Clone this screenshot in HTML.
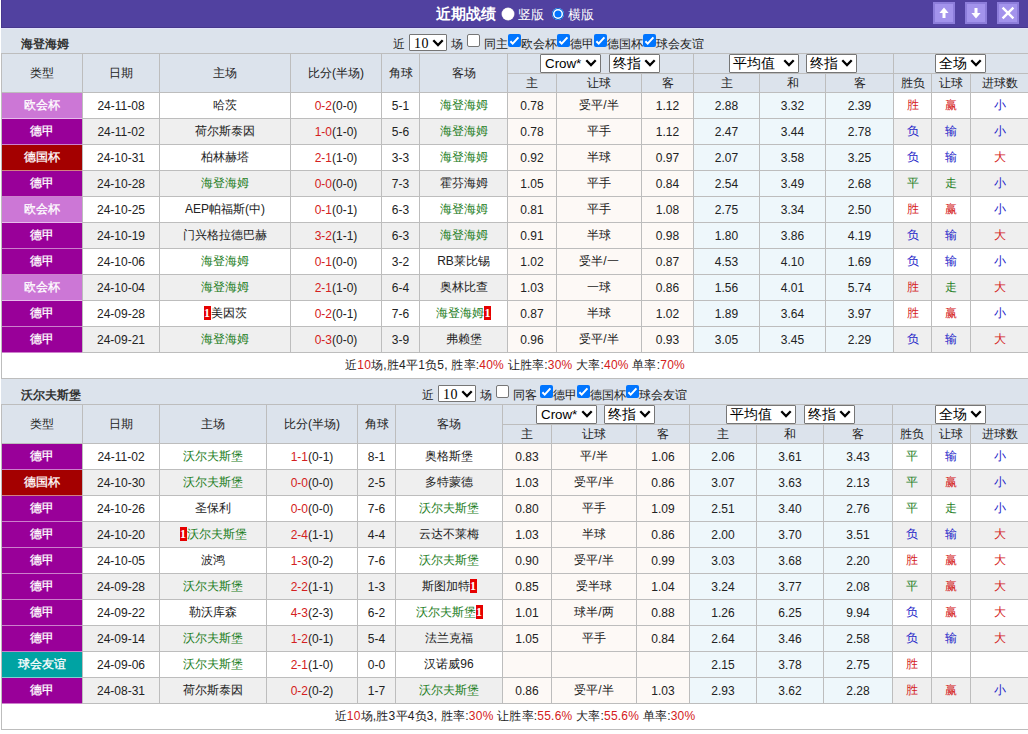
<!DOCTYPE html><html><head><meta charset="utf-8"><style>
html,body{margin:0;padding:0;background:#fff;}
body{width:1028px;height:734px;overflow:hidden;position:relative;font-family:"Liberation Sans",sans-serif;font-size:12px;color:#222;}
div{position:absolute;box-sizing:border-box;}
span{position:relative}
.sel{background:#fff;border:1px solid #767676;border-radius:1px;color:#000;box-sizing:content-box;}
.cb{width:13px;height:13px;border-radius:2px;box-sizing:border-box;border:1px solid #767676;background:#fff}
.cb.on{background:#0075ff;border:none}
.card{display:inline-block;background:#e60000;color:#fff;font-family:"Liberation Serif",serif;font-weight:bold;font-size:12px;line-height:14px;width:7px;text-align:center}
</style></head><body>
<div style="left:1px;top:0px;width:1027px;height:28px;background:#5141a0;border-left:1px solid #48388e;border-bottom:1px solid #48388e"></div>
<div style="left:1px;top:28px;width:1027px;height:1px;background:#e2e3fa"></div>
<div style="left:436px;top:4px;white-space:nowrap;font-size:15px;font-weight:bold;color:#fff;line-height:20px">近期战绩</div>
<div style="left:502px;top:8px;width:12px;height:12px;border-radius:50%;background:#fff;box-shadow:0 0 0 0.5px #ddd"></div>
<div style="left:518px;top:6px;white-space:nowrap;color:#fff;line-height:18px;font-size:13px">竖版</div>
<div style="left:552px;top:8px;width:12px;height:12px;border-radius:50%;background:#0075ff;box-shadow:inset 0 0 0 1px #0060d0, inset 0 0 0 2.5px #fff"></div>
<div style="left:568px;top:6px;white-space:nowrap;color:#fff;line-height:18px;font-size:13px">横版</div>
<div style="left:933px;top:2px;width:22px;height:22px;background:#a393ec;border:2px solid #8d7ddb"><svg width="18" height="18" viewBox="0 0 18 18" style="position:absolute;left:0;top:0"><path d="M9 3.6 L13.6 9 L10.5 9 L10.5 14 L7.5 14 L7.5 9 L4.4 9 Z" fill="#fff"/></svg></div>
<div style="left:965px;top:2px;width:22px;height:22px;background:#a393ec;border:2px solid #8d7ddb"><svg width="18" height="18" viewBox="0 0 18 18" style="position:absolute;left:0;top:0"><path d="M9 14.4 L13.6 9 L10.5 9 L10.5 4 L7.5 4 L7.5 9 L4.4 9 Z" fill="#fff"/></svg></div>
<div style="left:997px;top:2px;width:22px;height:22px;background:#a393ec;border:2px solid #8d7ddb"><svg width="18" height="18" viewBox="0 0 18 18" style="position:absolute;left:0;top:0"><path d="M3.6 3.6 L14.4 14.4 M14.4 3.6 L3.6 14.4" stroke="#fff" stroke-width="2.4"/></svg></div>
<div style="left:1px;top:29px;width:1027px;height:24px;background:#dce3ec"></div>
<div style="left:21px;top:36px;white-space:nowrap;font-weight:bold;line-height:16px;color:#333">海登海姆</div>
<div style="left:1px;top:379px;width:1027px;height:25px;background:#dce3ec"></div>
<div style="left:21px;top:387px;white-space:nowrap;font-weight:bold;line-height:16px;color:#333">沃尔夫斯堡</div>
<div style="left:393px;top:36px;white-space:nowrap;line-height:16px">近</div>
<div class="sel" style="left:409px;top:34px;width:36px;height:15px;"><span style="position:absolute;left:4px;top:1px;line-height:15px;font-family:'Liberation Serif',serif;font-size:14px;letter-spacing:0.5px">10</span><svg style="position:absolute;left:22px;top:4px" width="12" height="8" viewBox="0 0 12 8"><path d="M1.3 1.3 L6 6 L10.7 1.3" fill="none" stroke="#000" stroke-width="2.3"/></svg></div>
<div style="left:451px;top:36px;white-space:nowrap;line-height:16px">场</div>
<div class="cb" style="left:467px;top:34px"></div>
<div style="left:484px;top:36px;white-space:nowrap;line-height:16px">同主</div>
<div class="cb on" style="left:508px;top:34px"><svg width="13" height="13" viewBox="0 0 13 13" style="position:absolute;left:0;top:0"><path d="M2.4 7.2 L4.7 9.6 L10.4 3.3" fill="none" stroke="#fff" stroke-width="2"/></svg></div>
<div style="left:521px;top:36px;white-space:nowrap;line-height:16px">欧会杯</div>
<div class="cb on" style="left:557px;top:34px"><svg width="13" height="13" viewBox="0 0 13 13" style="position:absolute;left:0;top:0"><path d="M2.4 7.2 L4.7 9.6 L10.4 3.3" fill="none" stroke="#fff" stroke-width="2"/></svg></div>
<div style="left:570px;top:36px;white-space:nowrap;line-height:16px">德甲</div>
<div class="cb on" style="left:594px;top:34px"><svg width="13" height="13" viewBox="0 0 13 13" style="position:absolute;left:0;top:0"><path d="M2.4 7.2 L4.7 9.6 L10.4 3.3" fill="none" stroke="#fff" stroke-width="2"/></svg></div>
<div style="left:607px;top:36px;white-space:nowrap;line-height:16px">德国杯</div>
<div class="cb on" style="left:643px;top:34px"><svg width="13" height="13" viewBox="0 0 13 13" style="position:absolute;left:0;top:0"><path d="M2.4 7.2 L4.7 9.6 L10.4 3.3" fill="none" stroke="#fff" stroke-width="2"/></svg></div>
<div style="left:656px;top:36px;white-space:nowrap;line-height:16px">球会友谊</div>
<div style="left:422px;top:387px;white-space:nowrap;line-height:16px">近</div>
<div class="sel" style="left:438px;top:385px;width:36px;height:15px;"><span style="position:absolute;left:4px;top:1px;line-height:15px;font-family:'Liberation Serif',serif;font-size:14px;letter-spacing:0.5px">10</span><svg style="position:absolute;left:22px;top:4px" width="12" height="8" viewBox="0 0 12 8"><path d="M1.3 1.3 L6 6 L10.7 1.3" fill="none" stroke="#000" stroke-width="2.3"/></svg></div>
<div style="left:480px;top:387px;white-space:nowrap;line-height:16px">场</div>
<div class="cb" style="left:496px;top:385px"></div>
<div style="left:513px;top:387px;white-space:nowrap;line-height:16px">同客</div>
<div class="cb on" style="left:540px;top:385px"><svg width="13" height="13" viewBox="0 0 13 13" style="position:absolute;left:0;top:0"><path d="M2.4 7.2 L4.7 9.6 L10.4 3.3" fill="none" stroke="#fff" stroke-width="2"/></svg></div>
<div style="left:553px;top:387px;white-space:nowrap;line-height:16px">德甲</div>
<div class="cb on" style="left:577px;top:385px"><svg width="13" height="13" viewBox="0 0 13 13" style="position:absolute;left:0;top:0"><path d="M2.4 7.2 L4.7 9.6 L10.4 3.3" fill="none" stroke="#fff" stroke-width="2"/></svg></div>
<div style="left:590px;top:387px;white-space:nowrap;line-height:16px">德国杯</div>
<div class="cb on" style="left:626px;top:385px"><svg width="13" height="13" viewBox="0 0 13 13" style="position:absolute;left:0;top:0"><path d="M2.4 7.2 L4.7 9.6 L10.4 3.3" fill="none" stroke="#fff" stroke-width="2"/></svg></div>
<div style="left:639px;top:387px;white-space:nowrap;line-height:16px">球会友谊</div>
<div style="left:2px;top:54px;width:1026px;height:38px;background:#dce3ec"></div>
<div style="left:2px;top:93px;width:80px;height:25px;display:flex;align-items:center;justify-content:center;white-space:nowrap;background:#cc77d6;color:#fff;-webkit-text-stroke:0.3px #fff"><span>欧会杯</span></div>
<div style="left:83px;top:93px;width:76px;height:25px;display:flex;align-items:center;justify-content:center;white-space:nowrap;background:#ffffff"><span>24-11-08</span></div>
<div style="left:160px;top:93px;width:130px;height:25px;display:flex;align-items:center;justify-content:center;white-space:nowrap;background:#ffffff"><span><span style="">哈茨</span></span></div>
<div style="left:291px;top:93px;width:90px;height:25px;display:flex;align-items:center;justify-content:center;white-space:nowrap;background:#ffffff"><span><span style="color:#d42020">0-2</span>(0-0)</span></div>
<div style="left:382px;top:93px;width:37px;height:25px;display:flex;align-items:center;justify-content:center;white-space:nowrap;background:#ffffff"><span>5-1</span></div>
<div style="left:420px;top:93px;width:87px;height:25px;display:flex;align-items:center;justify-content:center;white-space:nowrap;background:#ffffff"><span><span style="color:#1e7e1e">海登海姆</span></span></div>
<div style="left:508px;top:93px;width:48px;height:25px;display:flex;align-items:center;justify-content:center;white-space:nowrap;background:#fdf9f6"><span>0.78</span></div>
<div style="left:557px;top:93px;width:84px;height:25px;display:flex;align-items:center;justify-content:center;white-space:nowrap;background:#fdf9f6"><span>受平/半</span></div>
<div style="left:642px;top:93px;width:51px;height:25px;display:flex;align-items:center;justify-content:center;white-space:nowrap;background:#fdf9f6"><span>1.12</span></div>
<div style="left:694px;top:93px;width:65px;height:25px;display:flex;align-items:center;justify-content:center;white-space:nowrap;background:#eef7fb"><span>2.88</span></div>
<div style="left:760px;top:93px;width:65px;height:25px;display:flex;align-items:center;justify-content:center;white-space:nowrap;background:#eef7fb"><span>3.32</span></div>
<div style="left:826px;top:93px;width:67px;height:25px;display:flex;align-items:center;justify-content:center;white-space:nowrap;background:#eef7fb"><span>2.39</span></div>
<div style="left:894px;top:93px;width:37px;height:25px;display:flex;align-items:center;justify-content:center;white-space:nowrap;background:#ffffff;color:#d42020"><span>胜</span></div>
<div style="left:932px;top:93px;width:38px;height:25px;display:flex;align-items:center;justify-content:center;white-space:nowrap;background:#ffffff;color:#d42020"><span>赢</span></div>
<div style="left:971px;top:93px;width:57px;height:25px;display:flex;align-items:center;justify-content:center;white-space:nowrap;background:#ffffff;color:#1c1cc8"><span>小</span></div>
<div style="left:2px;top:119px;width:80px;height:25px;display:flex;align-items:center;justify-content:center;white-space:nowrap;background:#990099;color:#fff;-webkit-text-stroke:0.3px #fff"><span>德甲</span></div>
<div style="left:83px;top:119px;width:76px;height:25px;display:flex;align-items:center;justify-content:center;white-space:nowrap;background:#efefef"><span>24-11-02</span></div>
<div style="left:160px;top:119px;width:130px;height:25px;display:flex;align-items:center;justify-content:center;white-space:nowrap;background:#efefef"><span><span style="">荷尔斯泰因</span></span></div>
<div style="left:291px;top:119px;width:90px;height:25px;display:flex;align-items:center;justify-content:center;white-space:nowrap;background:#efefef"><span><span style="color:#d42020">1-0</span>(1-0)</span></div>
<div style="left:382px;top:119px;width:37px;height:25px;display:flex;align-items:center;justify-content:center;white-space:nowrap;background:#efefef"><span>5-6</span></div>
<div style="left:420px;top:119px;width:87px;height:25px;display:flex;align-items:center;justify-content:center;white-space:nowrap;background:#efefef"><span><span style="color:#1e7e1e">海登海姆</span></span></div>
<div style="left:508px;top:119px;width:48px;height:25px;display:flex;align-items:center;justify-content:center;white-space:nowrap;background:#fdf9f6"><span>0.78</span></div>
<div style="left:557px;top:119px;width:84px;height:25px;display:flex;align-items:center;justify-content:center;white-space:nowrap;background:#fdf9f6"><span>平手</span></div>
<div style="left:642px;top:119px;width:51px;height:25px;display:flex;align-items:center;justify-content:center;white-space:nowrap;background:#fdf9f6"><span>1.12</span></div>
<div style="left:694px;top:119px;width:65px;height:25px;display:flex;align-items:center;justify-content:center;white-space:nowrap;background:#eef7fb"><span>2.47</span></div>
<div style="left:760px;top:119px;width:65px;height:25px;display:flex;align-items:center;justify-content:center;white-space:nowrap;background:#eef7fb"><span>3.44</span></div>
<div style="left:826px;top:119px;width:67px;height:25px;display:flex;align-items:center;justify-content:center;white-space:nowrap;background:#eef7fb"><span>2.78</span></div>
<div style="left:894px;top:119px;width:37px;height:25px;display:flex;align-items:center;justify-content:center;white-space:nowrap;background:#efefef;color:#1c1cc8"><span>负</span></div>
<div style="left:932px;top:119px;width:38px;height:25px;display:flex;align-items:center;justify-content:center;white-space:nowrap;background:#efefef;color:#1c1cc8"><span>输</span></div>
<div style="left:971px;top:119px;width:57px;height:25px;display:flex;align-items:center;justify-content:center;white-space:nowrap;background:#efefef;color:#1c1cc8"><span>小</span></div>
<div style="left:2px;top:145px;width:80px;height:25px;display:flex;align-items:center;justify-content:center;white-space:nowrap;background:#a40000;color:#fff;-webkit-text-stroke:0.3px #fff"><span>德国杯</span></div>
<div style="left:83px;top:145px;width:76px;height:25px;display:flex;align-items:center;justify-content:center;white-space:nowrap;background:#ffffff"><span>24-10-31</span></div>
<div style="left:160px;top:145px;width:130px;height:25px;display:flex;align-items:center;justify-content:center;white-space:nowrap;background:#ffffff"><span><span style="">柏林赫塔</span></span></div>
<div style="left:291px;top:145px;width:90px;height:25px;display:flex;align-items:center;justify-content:center;white-space:nowrap;background:#ffffff"><span><span style="color:#d42020">2-1</span>(1-0)</span></div>
<div style="left:382px;top:145px;width:37px;height:25px;display:flex;align-items:center;justify-content:center;white-space:nowrap;background:#ffffff"><span>3-3</span></div>
<div style="left:420px;top:145px;width:87px;height:25px;display:flex;align-items:center;justify-content:center;white-space:nowrap;background:#ffffff"><span><span style="color:#1e7e1e">海登海姆</span></span></div>
<div style="left:508px;top:145px;width:48px;height:25px;display:flex;align-items:center;justify-content:center;white-space:nowrap;background:#fdf9f6"><span>0.92</span></div>
<div style="left:557px;top:145px;width:84px;height:25px;display:flex;align-items:center;justify-content:center;white-space:nowrap;background:#fdf9f6"><span>半球</span></div>
<div style="left:642px;top:145px;width:51px;height:25px;display:flex;align-items:center;justify-content:center;white-space:nowrap;background:#fdf9f6"><span>0.97</span></div>
<div style="left:694px;top:145px;width:65px;height:25px;display:flex;align-items:center;justify-content:center;white-space:nowrap;background:#eef7fb"><span>2.07</span></div>
<div style="left:760px;top:145px;width:65px;height:25px;display:flex;align-items:center;justify-content:center;white-space:nowrap;background:#eef7fb"><span>3.58</span></div>
<div style="left:826px;top:145px;width:67px;height:25px;display:flex;align-items:center;justify-content:center;white-space:nowrap;background:#eef7fb"><span>3.25</span></div>
<div style="left:894px;top:145px;width:37px;height:25px;display:flex;align-items:center;justify-content:center;white-space:nowrap;background:#ffffff;color:#1c1cc8"><span>负</span></div>
<div style="left:932px;top:145px;width:38px;height:25px;display:flex;align-items:center;justify-content:center;white-space:nowrap;background:#ffffff;color:#1c1cc8"><span>输</span></div>
<div style="left:971px;top:145px;width:57px;height:25px;display:flex;align-items:center;justify-content:center;white-space:nowrap;background:#ffffff;color:#d42020"><span>大</span></div>
<div style="left:2px;top:171px;width:80px;height:25px;display:flex;align-items:center;justify-content:center;white-space:nowrap;background:#990099;color:#fff;-webkit-text-stroke:0.3px #fff"><span>德甲</span></div>
<div style="left:83px;top:171px;width:76px;height:25px;display:flex;align-items:center;justify-content:center;white-space:nowrap;background:#efefef"><span>24-10-28</span></div>
<div style="left:160px;top:171px;width:130px;height:25px;display:flex;align-items:center;justify-content:center;white-space:nowrap;background:#efefef"><span><span style="color:#1e7e1e">海登海姆</span></span></div>
<div style="left:291px;top:171px;width:90px;height:25px;display:flex;align-items:center;justify-content:center;white-space:nowrap;background:#efefef"><span><span style="color:#d42020">0-0</span>(0-0)</span></div>
<div style="left:382px;top:171px;width:37px;height:25px;display:flex;align-items:center;justify-content:center;white-space:nowrap;background:#efefef"><span>7-3</span></div>
<div style="left:420px;top:171px;width:87px;height:25px;display:flex;align-items:center;justify-content:center;white-space:nowrap;background:#efefef"><span><span style="">霍芬海姆</span></span></div>
<div style="left:508px;top:171px;width:48px;height:25px;display:flex;align-items:center;justify-content:center;white-space:nowrap;background:#fdf9f6"><span>1.05</span></div>
<div style="left:557px;top:171px;width:84px;height:25px;display:flex;align-items:center;justify-content:center;white-space:nowrap;background:#fdf9f6"><span>平手</span></div>
<div style="left:642px;top:171px;width:51px;height:25px;display:flex;align-items:center;justify-content:center;white-space:nowrap;background:#fdf9f6"><span>0.84</span></div>
<div style="left:694px;top:171px;width:65px;height:25px;display:flex;align-items:center;justify-content:center;white-space:nowrap;background:#eef7fb"><span>2.54</span></div>
<div style="left:760px;top:171px;width:65px;height:25px;display:flex;align-items:center;justify-content:center;white-space:nowrap;background:#eef7fb"><span>3.49</span></div>
<div style="left:826px;top:171px;width:67px;height:25px;display:flex;align-items:center;justify-content:center;white-space:nowrap;background:#eef7fb"><span>2.68</span></div>
<div style="left:894px;top:171px;width:37px;height:25px;display:flex;align-items:center;justify-content:center;white-space:nowrap;background:#efefef;color:#1e7e1e"><span>平</span></div>
<div style="left:932px;top:171px;width:38px;height:25px;display:flex;align-items:center;justify-content:center;white-space:nowrap;background:#efefef;color:#1e7e1e"><span>走</span></div>
<div style="left:971px;top:171px;width:57px;height:25px;display:flex;align-items:center;justify-content:center;white-space:nowrap;background:#efefef;color:#1c1cc8"><span>小</span></div>
<div style="left:2px;top:197px;width:80px;height:25px;display:flex;align-items:center;justify-content:center;white-space:nowrap;background:#cc77d6;color:#fff;-webkit-text-stroke:0.3px #fff"><span>欧会杯</span></div>
<div style="left:83px;top:197px;width:76px;height:25px;display:flex;align-items:center;justify-content:center;white-space:nowrap;background:#ffffff"><span>24-10-25</span></div>
<div style="left:160px;top:197px;width:130px;height:25px;display:flex;align-items:center;justify-content:center;white-space:nowrap;background:#ffffff"><span><span style="">AEP帕福斯(中)</span></span></div>
<div style="left:291px;top:197px;width:90px;height:25px;display:flex;align-items:center;justify-content:center;white-space:nowrap;background:#ffffff"><span><span style="color:#d42020">0-1</span>(0-1)</span></div>
<div style="left:382px;top:197px;width:37px;height:25px;display:flex;align-items:center;justify-content:center;white-space:nowrap;background:#ffffff"><span>6-3</span></div>
<div style="left:420px;top:197px;width:87px;height:25px;display:flex;align-items:center;justify-content:center;white-space:nowrap;background:#ffffff"><span><span style="color:#1e7e1e">海登海姆</span></span></div>
<div style="left:508px;top:197px;width:48px;height:25px;display:flex;align-items:center;justify-content:center;white-space:nowrap;background:#fdf9f6"><span>0.81</span></div>
<div style="left:557px;top:197px;width:84px;height:25px;display:flex;align-items:center;justify-content:center;white-space:nowrap;background:#fdf9f6"><span>平手</span></div>
<div style="left:642px;top:197px;width:51px;height:25px;display:flex;align-items:center;justify-content:center;white-space:nowrap;background:#fdf9f6"><span>1.08</span></div>
<div style="left:694px;top:197px;width:65px;height:25px;display:flex;align-items:center;justify-content:center;white-space:nowrap;background:#eef7fb"><span>2.75</span></div>
<div style="left:760px;top:197px;width:65px;height:25px;display:flex;align-items:center;justify-content:center;white-space:nowrap;background:#eef7fb"><span>3.34</span></div>
<div style="left:826px;top:197px;width:67px;height:25px;display:flex;align-items:center;justify-content:center;white-space:nowrap;background:#eef7fb"><span>2.50</span></div>
<div style="left:894px;top:197px;width:37px;height:25px;display:flex;align-items:center;justify-content:center;white-space:nowrap;background:#ffffff;color:#d42020"><span>胜</span></div>
<div style="left:932px;top:197px;width:38px;height:25px;display:flex;align-items:center;justify-content:center;white-space:nowrap;background:#ffffff;color:#d42020"><span>赢</span></div>
<div style="left:971px;top:197px;width:57px;height:25px;display:flex;align-items:center;justify-content:center;white-space:nowrap;background:#ffffff;color:#1c1cc8"><span>小</span></div>
<div style="left:2px;top:223px;width:80px;height:25px;display:flex;align-items:center;justify-content:center;white-space:nowrap;background:#990099;color:#fff;-webkit-text-stroke:0.3px #fff"><span>德甲</span></div>
<div style="left:83px;top:223px;width:76px;height:25px;display:flex;align-items:center;justify-content:center;white-space:nowrap;background:#efefef"><span>24-10-19</span></div>
<div style="left:160px;top:223px;width:130px;height:25px;display:flex;align-items:center;justify-content:center;white-space:nowrap;background:#efefef"><span><span style="">门兴格拉德巴赫</span></span></div>
<div style="left:291px;top:223px;width:90px;height:25px;display:flex;align-items:center;justify-content:center;white-space:nowrap;background:#efefef"><span><span style="color:#d42020">3-2</span>(1-1)</span></div>
<div style="left:382px;top:223px;width:37px;height:25px;display:flex;align-items:center;justify-content:center;white-space:nowrap;background:#efefef"><span>6-3</span></div>
<div style="left:420px;top:223px;width:87px;height:25px;display:flex;align-items:center;justify-content:center;white-space:nowrap;background:#efefef"><span><span style="color:#1e7e1e">海登海姆</span></span></div>
<div style="left:508px;top:223px;width:48px;height:25px;display:flex;align-items:center;justify-content:center;white-space:nowrap;background:#fdf9f6"><span>0.91</span></div>
<div style="left:557px;top:223px;width:84px;height:25px;display:flex;align-items:center;justify-content:center;white-space:nowrap;background:#fdf9f6"><span>半球</span></div>
<div style="left:642px;top:223px;width:51px;height:25px;display:flex;align-items:center;justify-content:center;white-space:nowrap;background:#fdf9f6"><span>0.98</span></div>
<div style="left:694px;top:223px;width:65px;height:25px;display:flex;align-items:center;justify-content:center;white-space:nowrap;background:#eef7fb"><span>1.80</span></div>
<div style="left:760px;top:223px;width:65px;height:25px;display:flex;align-items:center;justify-content:center;white-space:nowrap;background:#eef7fb"><span>3.86</span></div>
<div style="left:826px;top:223px;width:67px;height:25px;display:flex;align-items:center;justify-content:center;white-space:nowrap;background:#eef7fb"><span>4.19</span></div>
<div style="left:894px;top:223px;width:37px;height:25px;display:flex;align-items:center;justify-content:center;white-space:nowrap;background:#efefef;color:#1c1cc8"><span>负</span></div>
<div style="left:932px;top:223px;width:38px;height:25px;display:flex;align-items:center;justify-content:center;white-space:nowrap;background:#efefef;color:#1c1cc8"><span>输</span></div>
<div style="left:971px;top:223px;width:57px;height:25px;display:flex;align-items:center;justify-content:center;white-space:nowrap;background:#efefef;color:#d42020"><span>大</span></div>
<div style="left:2px;top:249px;width:80px;height:25px;display:flex;align-items:center;justify-content:center;white-space:nowrap;background:#990099;color:#fff;-webkit-text-stroke:0.3px #fff"><span>德甲</span></div>
<div style="left:83px;top:249px;width:76px;height:25px;display:flex;align-items:center;justify-content:center;white-space:nowrap;background:#ffffff"><span>24-10-06</span></div>
<div style="left:160px;top:249px;width:130px;height:25px;display:flex;align-items:center;justify-content:center;white-space:nowrap;background:#ffffff"><span><span style="color:#1e7e1e">海登海姆</span></span></div>
<div style="left:291px;top:249px;width:90px;height:25px;display:flex;align-items:center;justify-content:center;white-space:nowrap;background:#ffffff"><span><span style="color:#d42020">0-1</span>(0-0)</span></div>
<div style="left:382px;top:249px;width:37px;height:25px;display:flex;align-items:center;justify-content:center;white-space:nowrap;background:#ffffff"><span>3-2</span></div>
<div style="left:420px;top:249px;width:87px;height:25px;display:flex;align-items:center;justify-content:center;white-space:nowrap;background:#ffffff"><span><span style="">RB莱比锡</span></span></div>
<div style="left:508px;top:249px;width:48px;height:25px;display:flex;align-items:center;justify-content:center;white-space:nowrap;background:#fdf9f6"><span>1.02</span></div>
<div style="left:557px;top:249px;width:84px;height:25px;display:flex;align-items:center;justify-content:center;white-space:nowrap;background:#fdf9f6"><span>受半/一</span></div>
<div style="left:642px;top:249px;width:51px;height:25px;display:flex;align-items:center;justify-content:center;white-space:nowrap;background:#fdf9f6"><span>0.87</span></div>
<div style="left:694px;top:249px;width:65px;height:25px;display:flex;align-items:center;justify-content:center;white-space:nowrap;background:#eef7fb"><span>4.53</span></div>
<div style="left:760px;top:249px;width:65px;height:25px;display:flex;align-items:center;justify-content:center;white-space:nowrap;background:#eef7fb"><span>4.10</span></div>
<div style="left:826px;top:249px;width:67px;height:25px;display:flex;align-items:center;justify-content:center;white-space:nowrap;background:#eef7fb"><span>1.69</span></div>
<div style="left:894px;top:249px;width:37px;height:25px;display:flex;align-items:center;justify-content:center;white-space:nowrap;background:#ffffff;color:#1c1cc8"><span>负</span></div>
<div style="left:932px;top:249px;width:38px;height:25px;display:flex;align-items:center;justify-content:center;white-space:nowrap;background:#ffffff;color:#1c1cc8"><span>输</span></div>
<div style="left:971px;top:249px;width:57px;height:25px;display:flex;align-items:center;justify-content:center;white-space:nowrap;background:#ffffff;color:#1c1cc8"><span>小</span></div>
<div style="left:2px;top:275px;width:80px;height:25px;display:flex;align-items:center;justify-content:center;white-space:nowrap;background:#cc77d6;color:#fff;-webkit-text-stroke:0.3px #fff"><span>欧会杯</span></div>
<div style="left:83px;top:275px;width:76px;height:25px;display:flex;align-items:center;justify-content:center;white-space:nowrap;background:#efefef"><span>24-10-04</span></div>
<div style="left:160px;top:275px;width:130px;height:25px;display:flex;align-items:center;justify-content:center;white-space:nowrap;background:#efefef"><span><span style="color:#1e7e1e">海登海姆</span></span></div>
<div style="left:291px;top:275px;width:90px;height:25px;display:flex;align-items:center;justify-content:center;white-space:nowrap;background:#efefef"><span><span style="color:#d42020">2-1</span>(1-0)</span></div>
<div style="left:382px;top:275px;width:37px;height:25px;display:flex;align-items:center;justify-content:center;white-space:nowrap;background:#efefef"><span>6-4</span></div>
<div style="left:420px;top:275px;width:87px;height:25px;display:flex;align-items:center;justify-content:center;white-space:nowrap;background:#efefef"><span><span style="">奥林比查</span></span></div>
<div style="left:508px;top:275px;width:48px;height:25px;display:flex;align-items:center;justify-content:center;white-space:nowrap;background:#fdf9f6"><span>1.03</span></div>
<div style="left:557px;top:275px;width:84px;height:25px;display:flex;align-items:center;justify-content:center;white-space:nowrap;background:#fdf9f6"><span>一球</span></div>
<div style="left:642px;top:275px;width:51px;height:25px;display:flex;align-items:center;justify-content:center;white-space:nowrap;background:#fdf9f6"><span>0.86</span></div>
<div style="left:694px;top:275px;width:65px;height:25px;display:flex;align-items:center;justify-content:center;white-space:nowrap;background:#eef7fb"><span>1.56</span></div>
<div style="left:760px;top:275px;width:65px;height:25px;display:flex;align-items:center;justify-content:center;white-space:nowrap;background:#eef7fb"><span>4.01</span></div>
<div style="left:826px;top:275px;width:67px;height:25px;display:flex;align-items:center;justify-content:center;white-space:nowrap;background:#eef7fb"><span>5.74</span></div>
<div style="left:894px;top:275px;width:37px;height:25px;display:flex;align-items:center;justify-content:center;white-space:nowrap;background:#efefef;color:#d42020"><span>胜</span></div>
<div style="left:932px;top:275px;width:38px;height:25px;display:flex;align-items:center;justify-content:center;white-space:nowrap;background:#efefef;color:#1e7e1e"><span>走</span></div>
<div style="left:971px;top:275px;width:57px;height:25px;display:flex;align-items:center;justify-content:center;white-space:nowrap;background:#efefef;color:#d42020"><span>大</span></div>
<div style="left:2px;top:301px;width:80px;height:25px;display:flex;align-items:center;justify-content:center;white-space:nowrap;background:#990099;color:#fff;-webkit-text-stroke:0.3px #fff"><span>德甲</span></div>
<div style="left:83px;top:301px;width:76px;height:25px;display:flex;align-items:center;justify-content:center;white-space:nowrap;background:#ffffff"><span>24-09-28</span></div>
<div style="left:160px;top:301px;width:130px;height:25px;display:flex;align-items:center;justify-content:center;white-space:nowrap;background:#ffffff"><span><span class="card">1</span><span style="">美因茨</span></span></div>
<div style="left:291px;top:301px;width:90px;height:25px;display:flex;align-items:center;justify-content:center;white-space:nowrap;background:#ffffff"><span><span style="color:#d42020">0-2</span>(0-1)</span></div>
<div style="left:382px;top:301px;width:37px;height:25px;display:flex;align-items:center;justify-content:center;white-space:nowrap;background:#ffffff"><span>7-6</span></div>
<div style="left:420px;top:301px;width:87px;height:25px;display:flex;align-items:center;justify-content:center;white-space:nowrap;background:#ffffff"><span><span style="color:#1e7e1e">海登海姆</span><span class="card">1</span></span></div>
<div style="left:508px;top:301px;width:48px;height:25px;display:flex;align-items:center;justify-content:center;white-space:nowrap;background:#fdf9f6"><span>0.87</span></div>
<div style="left:557px;top:301px;width:84px;height:25px;display:flex;align-items:center;justify-content:center;white-space:nowrap;background:#fdf9f6"><span>半球</span></div>
<div style="left:642px;top:301px;width:51px;height:25px;display:flex;align-items:center;justify-content:center;white-space:nowrap;background:#fdf9f6"><span>1.02</span></div>
<div style="left:694px;top:301px;width:65px;height:25px;display:flex;align-items:center;justify-content:center;white-space:nowrap;background:#eef7fb"><span>1.89</span></div>
<div style="left:760px;top:301px;width:65px;height:25px;display:flex;align-items:center;justify-content:center;white-space:nowrap;background:#eef7fb"><span>3.64</span></div>
<div style="left:826px;top:301px;width:67px;height:25px;display:flex;align-items:center;justify-content:center;white-space:nowrap;background:#eef7fb"><span>3.97</span></div>
<div style="left:894px;top:301px;width:37px;height:25px;display:flex;align-items:center;justify-content:center;white-space:nowrap;background:#ffffff;color:#d42020"><span>胜</span></div>
<div style="left:932px;top:301px;width:38px;height:25px;display:flex;align-items:center;justify-content:center;white-space:nowrap;background:#ffffff;color:#d42020"><span>赢</span></div>
<div style="left:971px;top:301px;width:57px;height:25px;display:flex;align-items:center;justify-content:center;white-space:nowrap;background:#ffffff;color:#1c1cc8"><span>小</span></div>
<div style="left:2px;top:327px;width:80px;height:25px;display:flex;align-items:center;justify-content:center;white-space:nowrap;background:#990099;color:#fff;-webkit-text-stroke:0.3px #fff"><span>德甲</span></div>
<div style="left:83px;top:327px;width:76px;height:25px;display:flex;align-items:center;justify-content:center;white-space:nowrap;background:#efefef"><span>24-09-21</span></div>
<div style="left:160px;top:327px;width:130px;height:25px;display:flex;align-items:center;justify-content:center;white-space:nowrap;background:#efefef"><span><span style="color:#1e7e1e">海登海姆</span></span></div>
<div style="left:291px;top:327px;width:90px;height:25px;display:flex;align-items:center;justify-content:center;white-space:nowrap;background:#efefef"><span><span style="color:#d42020">0-3</span>(0-0)</span></div>
<div style="left:382px;top:327px;width:37px;height:25px;display:flex;align-items:center;justify-content:center;white-space:nowrap;background:#efefef"><span>3-9</span></div>
<div style="left:420px;top:327px;width:87px;height:25px;display:flex;align-items:center;justify-content:center;white-space:nowrap;background:#efefef"><span><span style="">弗赖堡</span></span></div>
<div style="left:508px;top:327px;width:48px;height:25px;display:flex;align-items:center;justify-content:center;white-space:nowrap;background:#fdf9f6"><span>0.96</span></div>
<div style="left:557px;top:327px;width:84px;height:25px;display:flex;align-items:center;justify-content:center;white-space:nowrap;background:#fdf9f6"><span>受平/半</span></div>
<div style="left:642px;top:327px;width:51px;height:25px;display:flex;align-items:center;justify-content:center;white-space:nowrap;background:#fdf9f6"><span>0.93</span></div>
<div style="left:694px;top:327px;width:65px;height:25px;display:flex;align-items:center;justify-content:center;white-space:nowrap;background:#eef7fb"><span>3.05</span></div>
<div style="left:760px;top:327px;width:65px;height:25px;display:flex;align-items:center;justify-content:center;white-space:nowrap;background:#eef7fb"><span>3.45</span></div>
<div style="left:826px;top:327px;width:67px;height:25px;display:flex;align-items:center;justify-content:center;white-space:nowrap;background:#eef7fb"><span>2.29</span></div>
<div style="left:894px;top:327px;width:37px;height:25px;display:flex;align-items:center;justify-content:center;white-space:nowrap;background:#efefef;color:#1c1cc8"><span>负</span></div>
<div style="left:932px;top:327px;width:38px;height:25px;display:flex;align-items:center;justify-content:center;white-space:nowrap;background:#efefef;color:#1c1cc8"><span>输</span></div>
<div style="left:971px;top:327px;width:57px;height:25px;display:flex;align-items:center;justify-content:center;white-space:nowrap;background:#efefef;color:#d42020"><span>大</span></div>
<div style="left:2px;top:353px;width:1026px;height:25px;background:#fff;display:flex;align-items:center;justify-content:center;white-space:nowrap;letter-spacing:0.22px"><span>近<span style="color:#d42020">10</span>场,胜4平1负5, 胜率:<span style="color:#d42020">40%</span> 让胜率:<span style="color:#d42020">30%</span> 大率:<span style="color:#d42020">40%</span> 单率:<span style="color:#d42020">70%</span></span></div>
<div style="left:1px;top:53px;width:1027px;height:1px;background:#bdbdbd"></div>
<div style="left:507px;top:73px;width:521px;height:1px;background:#bdbdbd"></div>
<div style="left:1px;top:92px;width:1027px;height:1px;background:#bdbdbd"></div>
<div style="left:1px;top:118px;width:1027px;height:1px;background:#bdbdbd"></div>
<div style="left:1px;top:144px;width:1027px;height:1px;background:#bdbdbd"></div>
<div style="left:1px;top:170px;width:1027px;height:1px;background:#bdbdbd"></div>
<div style="left:1px;top:196px;width:1027px;height:1px;background:#bdbdbd"></div>
<div style="left:1px;top:222px;width:1027px;height:1px;background:#bdbdbd"></div>
<div style="left:1px;top:248px;width:1027px;height:1px;background:#bdbdbd"></div>
<div style="left:1px;top:274px;width:1027px;height:1px;background:#bdbdbd"></div>
<div style="left:1px;top:300px;width:1027px;height:1px;background:#bdbdbd"></div>
<div style="left:1px;top:326px;width:1027px;height:1px;background:#bdbdbd"></div>
<div style="left:1px;top:352px;width:1027px;height:1px;background:#bdbdbd"></div>
<div style="left:1px;top:378px;width:1027px;height:1px;background:#bdbdbd"></div>
<div style="left:1px;top:53px;width:1px;height:299px;background:#bdbdbd"></div>
<div style="left:82px;top:53px;width:1px;height:299px;background:#bdbdbd"></div>
<div style="left:159px;top:53px;width:1px;height:299px;background:#bdbdbd"></div>
<div style="left:290px;top:53px;width:1px;height:299px;background:#bdbdbd"></div>
<div style="left:381px;top:53px;width:1px;height:299px;background:#bdbdbd"></div>
<div style="left:419px;top:53px;width:1px;height:299px;background:#bdbdbd"></div>
<div style="left:507px;top:53px;width:1px;height:299px;background:#bdbdbd"></div>
<div style="left:556px;top:73px;width:1px;height:279px;background:#bdbdbd"></div>
<div style="left:641px;top:73px;width:1px;height:279px;background:#bdbdbd"></div>
<div style="left:693px;top:53px;width:1px;height:299px;background:#bdbdbd"></div>
<div style="left:759px;top:73px;width:1px;height:279px;background:#bdbdbd"></div>
<div style="left:825px;top:73px;width:1px;height:279px;background:#bdbdbd"></div>
<div style="left:893px;top:53px;width:1px;height:299px;background:#bdbdbd"></div>
<div style="left:931px;top:73px;width:1px;height:279px;background:#bdbdbd"></div>
<div style="left:970px;top:73px;width:1px;height:279px;background:#bdbdbd"></div>
<div style="left:1px;top:352px;width:1px;height:27px;background:#bdbdbd"></div>
<div style="left:2px;top:118px;width:80px;height:1px;background:#cc77d6"><div style="left:0;top:0;width:100%;height:1px;background:rgba(255,255,255,0.5)"></div></div>
<div style="left:2px;top:144px;width:80px;height:1px;background:#990099"><div style="left:0;top:0;width:100%;height:1px;background:rgba(255,255,255,0.5)"></div></div>
<div style="left:2px;top:170px;width:80px;height:1px;background:#a40000"><div style="left:0;top:0;width:100%;height:1px;background:rgba(255,255,255,0.5)"></div></div>
<div style="left:2px;top:196px;width:80px;height:1px;background:#990099"><div style="left:0;top:0;width:100%;height:1px;background:rgba(255,255,255,0.5)"></div></div>
<div style="left:2px;top:222px;width:80px;height:1px;background:#cc77d6"><div style="left:0;top:0;width:100%;height:1px;background:rgba(255,255,255,0.5)"></div></div>
<div style="left:2px;top:248px;width:80px;height:1px;background:#990099"><div style="left:0;top:0;width:100%;height:1px;background:rgba(255,255,255,0.5)"></div></div>
<div style="left:2px;top:274px;width:80px;height:1px;background:#990099"><div style="left:0;top:0;width:100%;height:1px;background:rgba(255,255,255,0.5)"></div></div>
<div style="left:2px;top:300px;width:80px;height:1px;background:#cc77d6"><div style="left:0;top:0;width:100%;height:1px;background:rgba(255,255,255,0.5)"></div></div>
<div style="left:2px;top:326px;width:80px;height:1px;background:#990099"><div style="left:0;top:0;width:100%;height:1px;background:rgba(255,255,255,0.5)"></div></div>
<div style="left:2px;top:352px;width:80px;height:1px;background:#990099"><div style="left:0;top:0;width:100%;height:1px;background:rgba(255,255,255,0.5)"></div></div>
<div style="left:2px;top:54px;width:80px;height:38px;display:flex;align-items:center;justify-content:center;white-space:nowrap;"><span>类型</span></div>
<div style="left:83px;top:54px;width:76px;height:38px;display:flex;align-items:center;justify-content:center;white-space:nowrap;"><span>日期</span></div>
<div style="left:160px;top:54px;width:130px;height:38px;display:flex;align-items:center;justify-content:center;white-space:nowrap;"><span>主场</span></div>
<div style="left:291px;top:54px;width:90px;height:38px;display:flex;align-items:center;justify-content:center;white-space:nowrap;"><span>比分(半场)</span></div>
<div style="left:382px;top:54px;width:37px;height:38px;display:flex;align-items:center;justify-content:center;white-space:nowrap;"><span>角球</span></div>
<div style="left:420px;top:54px;width:87px;height:38px;display:flex;align-items:center;justify-content:center;white-space:nowrap;"><span>客场</span></div>
<div style="left:508px;top:74px;width:48px;height:18px;display:flex;align-items:center;justify-content:center;white-space:nowrap;"><span>主</span></div>
<div style="left:557px;top:74px;width:84px;height:18px;display:flex;align-items:center;justify-content:center;white-space:nowrap;"><span>让球</span></div>
<div style="left:642px;top:74px;width:51px;height:18px;display:flex;align-items:center;justify-content:center;white-space:nowrap;"><span>客</span></div>
<div style="left:694px;top:74px;width:65px;height:18px;display:flex;align-items:center;justify-content:center;white-space:nowrap;"><span>主</span></div>
<div style="left:760px;top:74px;width:65px;height:18px;display:flex;align-items:center;justify-content:center;white-space:nowrap;"><span>和</span></div>
<div style="left:826px;top:74px;width:67px;height:18px;display:flex;align-items:center;justify-content:center;white-space:nowrap;"><span>客</span></div>
<div style="left:894px;top:74px;width:37px;height:18px;display:flex;align-items:center;justify-content:center;white-space:nowrap;"><span>胜负</span></div>
<div style="left:932px;top:74px;width:38px;height:18px;display:flex;align-items:center;justify-content:center;white-space:nowrap;"><span>让球</span></div>
<div style="left:971px;top:74px;width:57px;height:18px;display:flex;align-items:center;justify-content:center;white-space:nowrap;"><span>进球数</span></div>
<div class="sel" style="left:540px;top:54px;width:59px;height:17px;"><span style="position:absolute;left:4px;top:0;line-height:17px;font-size:13.33px;">Crow*</span><svg style="position:absolute;left:44px;top:4px" width="12" height="8" viewBox="0 0 12 8"><path d="M1.3 1.3 L6 6 L10.7 1.3" fill="none" stroke="#000" stroke-width="2.3"/></svg></div>
<div class="sel" style="left:609px;top:54px;width:49px;height:17px;"><span style="position:absolute;left:3px;top:0;line-height:17px;font-size:14px;">终指</span><svg style="position:absolute;left:34px;top:4px" width="12" height="8" viewBox="0 0 12 8"><path d="M1.3 1.3 L6 6 L10.7 1.3" fill="none" stroke="#000" stroke-width="2.3"/></svg></div>
<div class="sel" style="left:729px;top:54px;width:68px;height:17px;"><span style="position:absolute;left:3px;top:0;line-height:17px;font-size:14px;">平均值</span><svg style="position:absolute;left:53px;top:4px" width="12" height="8" viewBox="0 0 12 8"><path d="M1.3 1.3 L6 6 L10.7 1.3" fill="none" stroke="#000" stroke-width="2.3"/></svg></div>
<div class="sel" style="left:806px;top:54px;width:49px;height:17px;"><span style="position:absolute;left:3px;top:0;line-height:17px;font-size:14px;">终指</span><svg style="position:absolute;left:34px;top:4px" width="12" height="8" viewBox="0 0 12 8"><path d="M1.3 1.3 L6 6 L10.7 1.3" fill="none" stroke="#000" stroke-width="2.3"/></svg></div>
<div class="sel" style="left:935px;top:54px;width:49px;height:17px;"><span style="position:absolute;left:3px;top:0;line-height:17px;font-size:14px;">全场</span><svg style="position:absolute;left:34px;top:4px" width="12" height="8" viewBox="0 0 12 8"><path d="M1.3 1.3 L6 6 L10.7 1.3" fill="none" stroke="#000" stroke-width="2.3"/></svg></div>
<div style="left:2px;top:405px;width:1026px;height:38px;background:#dce3ec"></div>
<div style="left:2px;top:444px;width:80px;height:25px;display:flex;align-items:center;justify-content:center;white-space:nowrap;background:#990099;color:#fff;-webkit-text-stroke:0.3px #fff"><span>德甲</span></div>
<div style="left:83px;top:444px;width:76px;height:25px;display:flex;align-items:center;justify-content:center;white-space:nowrap;background:#ffffff"><span>24-11-02</span></div>
<div style="left:160px;top:444px;width:106px;height:25px;display:flex;align-items:center;justify-content:center;white-space:nowrap;background:#ffffff"><span><span style="color:#1e7e1e">沃尔夫斯堡</span></span></div>
<div style="left:267px;top:444px;width:90px;height:25px;display:flex;align-items:center;justify-content:center;white-space:nowrap;background:#ffffff"><span><span style="color:#d42020">1-1</span>(0-1)</span></div>
<div style="left:358px;top:444px;width:37px;height:25px;display:flex;align-items:center;justify-content:center;white-space:nowrap;background:#ffffff"><span>8-1</span></div>
<div style="left:396px;top:444px;width:106px;height:25px;display:flex;align-items:center;justify-content:center;white-space:nowrap;background:#ffffff"><span><span style="">奥格斯堡</span></span></div>
<div style="left:503px;top:444px;width:48px;height:25px;display:flex;align-items:center;justify-content:center;white-space:nowrap;background:#fdf9f6"><span>0.83</span></div>
<div style="left:552px;top:444px;width:84px;height:25px;display:flex;align-items:center;justify-content:center;white-space:nowrap;background:#fdf9f6"><span>平/半</span></div>
<div style="left:637px;top:444px;width:52px;height:25px;display:flex;align-items:center;justify-content:center;white-space:nowrap;background:#fdf9f6"><span>1.06</span></div>
<div style="left:690px;top:444px;width:66px;height:25px;display:flex;align-items:center;justify-content:center;white-space:nowrap;background:#eef7fb"><span>2.06</span></div>
<div style="left:757px;top:444px;width:66px;height:25px;display:flex;align-items:center;justify-content:center;white-space:nowrap;background:#eef7fb"><span>3.61</span></div>
<div style="left:824px;top:444px;width:68px;height:25px;display:flex;align-items:center;justify-content:center;white-space:nowrap;background:#eef7fb"><span>3.43</span></div>
<div style="left:893px;top:444px;width:38px;height:25px;display:flex;align-items:center;justify-content:center;white-space:nowrap;background:#ffffff;color:#1e7e1e"><span>平</span></div>
<div style="left:932px;top:444px;width:38px;height:25px;display:flex;align-items:center;justify-content:center;white-space:nowrap;background:#ffffff;color:#1c1cc8"><span>输</span></div>
<div style="left:971px;top:444px;width:57px;height:25px;display:flex;align-items:center;justify-content:center;white-space:nowrap;background:#ffffff;color:#1c1cc8"><span>小</span></div>
<div style="left:2px;top:470px;width:80px;height:25px;display:flex;align-items:center;justify-content:center;white-space:nowrap;background:#a40000;color:#fff;-webkit-text-stroke:0.3px #fff"><span>德国杯</span></div>
<div style="left:83px;top:470px;width:76px;height:25px;display:flex;align-items:center;justify-content:center;white-space:nowrap;background:#efefef"><span>24-10-30</span></div>
<div style="left:160px;top:470px;width:106px;height:25px;display:flex;align-items:center;justify-content:center;white-space:nowrap;background:#efefef"><span><span style="color:#1e7e1e">沃尔夫斯堡</span></span></div>
<div style="left:267px;top:470px;width:90px;height:25px;display:flex;align-items:center;justify-content:center;white-space:nowrap;background:#efefef"><span><span style="color:#d42020">0-0</span>(0-0)</span></div>
<div style="left:358px;top:470px;width:37px;height:25px;display:flex;align-items:center;justify-content:center;white-space:nowrap;background:#efefef"><span>2-5</span></div>
<div style="left:396px;top:470px;width:106px;height:25px;display:flex;align-items:center;justify-content:center;white-space:nowrap;background:#efefef"><span><span style="">多特蒙德</span></span></div>
<div style="left:503px;top:470px;width:48px;height:25px;display:flex;align-items:center;justify-content:center;white-space:nowrap;background:#fdf9f6"><span>1.03</span></div>
<div style="left:552px;top:470px;width:84px;height:25px;display:flex;align-items:center;justify-content:center;white-space:nowrap;background:#fdf9f6"><span>受平/半</span></div>
<div style="left:637px;top:470px;width:52px;height:25px;display:flex;align-items:center;justify-content:center;white-space:nowrap;background:#fdf9f6"><span>0.86</span></div>
<div style="left:690px;top:470px;width:66px;height:25px;display:flex;align-items:center;justify-content:center;white-space:nowrap;background:#eef7fb"><span>3.07</span></div>
<div style="left:757px;top:470px;width:66px;height:25px;display:flex;align-items:center;justify-content:center;white-space:nowrap;background:#eef7fb"><span>3.63</span></div>
<div style="left:824px;top:470px;width:68px;height:25px;display:flex;align-items:center;justify-content:center;white-space:nowrap;background:#eef7fb"><span>2.13</span></div>
<div style="left:893px;top:470px;width:38px;height:25px;display:flex;align-items:center;justify-content:center;white-space:nowrap;background:#efefef;color:#1e7e1e"><span>平</span></div>
<div style="left:932px;top:470px;width:38px;height:25px;display:flex;align-items:center;justify-content:center;white-space:nowrap;background:#efefef;color:#d42020"><span>赢</span></div>
<div style="left:971px;top:470px;width:57px;height:25px;display:flex;align-items:center;justify-content:center;white-space:nowrap;background:#efefef;color:#1c1cc8"><span>小</span></div>
<div style="left:2px;top:496px;width:80px;height:25px;display:flex;align-items:center;justify-content:center;white-space:nowrap;background:#990099;color:#fff;-webkit-text-stroke:0.3px #fff"><span>德甲</span></div>
<div style="left:83px;top:496px;width:76px;height:25px;display:flex;align-items:center;justify-content:center;white-space:nowrap;background:#ffffff"><span>24-10-26</span></div>
<div style="left:160px;top:496px;width:106px;height:25px;display:flex;align-items:center;justify-content:center;white-space:nowrap;background:#ffffff"><span><span style="">圣保利</span></span></div>
<div style="left:267px;top:496px;width:90px;height:25px;display:flex;align-items:center;justify-content:center;white-space:nowrap;background:#ffffff"><span><span style="color:#d42020">0-0</span>(0-0)</span></div>
<div style="left:358px;top:496px;width:37px;height:25px;display:flex;align-items:center;justify-content:center;white-space:nowrap;background:#ffffff"><span>7-6</span></div>
<div style="left:396px;top:496px;width:106px;height:25px;display:flex;align-items:center;justify-content:center;white-space:nowrap;background:#ffffff"><span><span style="color:#1e7e1e">沃尔夫斯堡</span></span></div>
<div style="left:503px;top:496px;width:48px;height:25px;display:flex;align-items:center;justify-content:center;white-space:nowrap;background:#fdf9f6"><span>0.80</span></div>
<div style="left:552px;top:496px;width:84px;height:25px;display:flex;align-items:center;justify-content:center;white-space:nowrap;background:#fdf9f6"><span>平手</span></div>
<div style="left:637px;top:496px;width:52px;height:25px;display:flex;align-items:center;justify-content:center;white-space:nowrap;background:#fdf9f6"><span>1.09</span></div>
<div style="left:690px;top:496px;width:66px;height:25px;display:flex;align-items:center;justify-content:center;white-space:nowrap;background:#eef7fb"><span>2.51</span></div>
<div style="left:757px;top:496px;width:66px;height:25px;display:flex;align-items:center;justify-content:center;white-space:nowrap;background:#eef7fb"><span>3.40</span></div>
<div style="left:824px;top:496px;width:68px;height:25px;display:flex;align-items:center;justify-content:center;white-space:nowrap;background:#eef7fb"><span>2.76</span></div>
<div style="left:893px;top:496px;width:38px;height:25px;display:flex;align-items:center;justify-content:center;white-space:nowrap;background:#ffffff;color:#1e7e1e"><span>平</span></div>
<div style="left:932px;top:496px;width:38px;height:25px;display:flex;align-items:center;justify-content:center;white-space:nowrap;background:#ffffff;color:#1e7e1e"><span>走</span></div>
<div style="left:971px;top:496px;width:57px;height:25px;display:flex;align-items:center;justify-content:center;white-space:nowrap;background:#ffffff;color:#1c1cc8"><span>小</span></div>
<div style="left:2px;top:522px;width:80px;height:25px;display:flex;align-items:center;justify-content:center;white-space:nowrap;background:#990099;color:#fff;-webkit-text-stroke:0.3px #fff"><span>德甲</span></div>
<div style="left:83px;top:522px;width:76px;height:25px;display:flex;align-items:center;justify-content:center;white-space:nowrap;background:#efefef"><span>24-10-20</span></div>
<div style="left:160px;top:522px;width:106px;height:25px;display:flex;align-items:center;justify-content:center;white-space:nowrap;background:#efefef"><span><span class="card">1</span><span style="color:#1e7e1e">沃尔夫斯堡</span></span></div>
<div style="left:267px;top:522px;width:90px;height:25px;display:flex;align-items:center;justify-content:center;white-space:nowrap;background:#efefef"><span><span style="color:#d42020">2-4</span>(1-1)</span></div>
<div style="left:358px;top:522px;width:37px;height:25px;display:flex;align-items:center;justify-content:center;white-space:nowrap;background:#efefef"><span>4-4</span></div>
<div style="left:396px;top:522px;width:106px;height:25px;display:flex;align-items:center;justify-content:center;white-space:nowrap;background:#efefef"><span><span style="">云达不莱梅</span></span></div>
<div style="left:503px;top:522px;width:48px;height:25px;display:flex;align-items:center;justify-content:center;white-space:nowrap;background:#fdf9f6"><span>1.03</span></div>
<div style="left:552px;top:522px;width:84px;height:25px;display:flex;align-items:center;justify-content:center;white-space:nowrap;background:#fdf9f6"><span>半球</span></div>
<div style="left:637px;top:522px;width:52px;height:25px;display:flex;align-items:center;justify-content:center;white-space:nowrap;background:#fdf9f6"><span>0.86</span></div>
<div style="left:690px;top:522px;width:66px;height:25px;display:flex;align-items:center;justify-content:center;white-space:nowrap;background:#eef7fb"><span>2.00</span></div>
<div style="left:757px;top:522px;width:66px;height:25px;display:flex;align-items:center;justify-content:center;white-space:nowrap;background:#eef7fb"><span>3.70</span></div>
<div style="left:824px;top:522px;width:68px;height:25px;display:flex;align-items:center;justify-content:center;white-space:nowrap;background:#eef7fb"><span>3.51</span></div>
<div style="left:893px;top:522px;width:38px;height:25px;display:flex;align-items:center;justify-content:center;white-space:nowrap;background:#efefef;color:#1c1cc8"><span>负</span></div>
<div style="left:932px;top:522px;width:38px;height:25px;display:flex;align-items:center;justify-content:center;white-space:nowrap;background:#efefef;color:#1c1cc8"><span>输</span></div>
<div style="left:971px;top:522px;width:57px;height:25px;display:flex;align-items:center;justify-content:center;white-space:nowrap;background:#efefef;color:#d42020"><span>大</span></div>
<div style="left:2px;top:548px;width:80px;height:25px;display:flex;align-items:center;justify-content:center;white-space:nowrap;background:#990099;color:#fff;-webkit-text-stroke:0.3px #fff"><span>德甲</span></div>
<div style="left:83px;top:548px;width:76px;height:25px;display:flex;align-items:center;justify-content:center;white-space:nowrap;background:#ffffff"><span>24-10-05</span></div>
<div style="left:160px;top:548px;width:106px;height:25px;display:flex;align-items:center;justify-content:center;white-space:nowrap;background:#ffffff"><span><span style="">波鸿</span></span></div>
<div style="left:267px;top:548px;width:90px;height:25px;display:flex;align-items:center;justify-content:center;white-space:nowrap;background:#ffffff"><span><span style="color:#d42020">1-3</span>(0-2)</span></div>
<div style="left:358px;top:548px;width:37px;height:25px;display:flex;align-items:center;justify-content:center;white-space:nowrap;background:#ffffff"><span>7-6</span></div>
<div style="left:396px;top:548px;width:106px;height:25px;display:flex;align-items:center;justify-content:center;white-space:nowrap;background:#ffffff"><span><span style="color:#1e7e1e">沃尔夫斯堡</span></span></div>
<div style="left:503px;top:548px;width:48px;height:25px;display:flex;align-items:center;justify-content:center;white-space:nowrap;background:#fdf9f6"><span>0.90</span></div>
<div style="left:552px;top:548px;width:84px;height:25px;display:flex;align-items:center;justify-content:center;white-space:nowrap;background:#fdf9f6"><span>受平/半</span></div>
<div style="left:637px;top:548px;width:52px;height:25px;display:flex;align-items:center;justify-content:center;white-space:nowrap;background:#fdf9f6"><span>0.99</span></div>
<div style="left:690px;top:548px;width:66px;height:25px;display:flex;align-items:center;justify-content:center;white-space:nowrap;background:#eef7fb"><span>3.03</span></div>
<div style="left:757px;top:548px;width:66px;height:25px;display:flex;align-items:center;justify-content:center;white-space:nowrap;background:#eef7fb"><span>3.68</span></div>
<div style="left:824px;top:548px;width:68px;height:25px;display:flex;align-items:center;justify-content:center;white-space:nowrap;background:#eef7fb"><span>2.20</span></div>
<div style="left:893px;top:548px;width:38px;height:25px;display:flex;align-items:center;justify-content:center;white-space:nowrap;background:#ffffff;color:#d42020"><span>胜</span></div>
<div style="left:932px;top:548px;width:38px;height:25px;display:flex;align-items:center;justify-content:center;white-space:nowrap;background:#ffffff;color:#d42020"><span>赢</span></div>
<div style="left:971px;top:548px;width:57px;height:25px;display:flex;align-items:center;justify-content:center;white-space:nowrap;background:#ffffff;color:#d42020"><span>大</span></div>
<div style="left:2px;top:574px;width:80px;height:25px;display:flex;align-items:center;justify-content:center;white-space:nowrap;background:#990099;color:#fff;-webkit-text-stroke:0.3px #fff"><span>德甲</span></div>
<div style="left:83px;top:574px;width:76px;height:25px;display:flex;align-items:center;justify-content:center;white-space:nowrap;background:#efefef"><span>24-09-28</span></div>
<div style="left:160px;top:574px;width:106px;height:25px;display:flex;align-items:center;justify-content:center;white-space:nowrap;background:#efefef"><span><span style="color:#1e7e1e">沃尔夫斯堡</span></span></div>
<div style="left:267px;top:574px;width:90px;height:25px;display:flex;align-items:center;justify-content:center;white-space:nowrap;background:#efefef"><span><span style="color:#d42020">2-2</span>(1-1)</span></div>
<div style="left:358px;top:574px;width:37px;height:25px;display:flex;align-items:center;justify-content:center;white-space:nowrap;background:#efefef"><span>1-3</span></div>
<div style="left:396px;top:574px;width:106px;height:25px;display:flex;align-items:center;justify-content:center;white-space:nowrap;background:#efefef"><span><span style="">斯图加特</span><span class="card">1</span></span></div>
<div style="left:503px;top:574px;width:48px;height:25px;display:flex;align-items:center;justify-content:center;white-space:nowrap;background:#fdf9f6"><span>0.85</span></div>
<div style="left:552px;top:574px;width:84px;height:25px;display:flex;align-items:center;justify-content:center;white-space:nowrap;background:#fdf9f6"><span>受半球</span></div>
<div style="left:637px;top:574px;width:52px;height:25px;display:flex;align-items:center;justify-content:center;white-space:nowrap;background:#fdf9f6"><span>1.04</span></div>
<div style="left:690px;top:574px;width:66px;height:25px;display:flex;align-items:center;justify-content:center;white-space:nowrap;background:#eef7fb"><span>3.24</span></div>
<div style="left:757px;top:574px;width:66px;height:25px;display:flex;align-items:center;justify-content:center;white-space:nowrap;background:#eef7fb"><span>3.77</span></div>
<div style="left:824px;top:574px;width:68px;height:25px;display:flex;align-items:center;justify-content:center;white-space:nowrap;background:#eef7fb"><span>2.08</span></div>
<div style="left:893px;top:574px;width:38px;height:25px;display:flex;align-items:center;justify-content:center;white-space:nowrap;background:#efefef;color:#1e7e1e"><span>平</span></div>
<div style="left:932px;top:574px;width:38px;height:25px;display:flex;align-items:center;justify-content:center;white-space:nowrap;background:#efefef;color:#d42020"><span>赢</span></div>
<div style="left:971px;top:574px;width:57px;height:25px;display:flex;align-items:center;justify-content:center;white-space:nowrap;background:#efefef;color:#d42020"><span>大</span></div>
<div style="left:2px;top:600px;width:80px;height:25px;display:flex;align-items:center;justify-content:center;white-space:nowrap;background:#990099;color:#fff;-webkit-text-stroke:0.3px #fff"><span>德甲</span></div>
<div style="left:83px;top:600px;width:76px;height:25px;display:flex;align-items:center;justify-content:center;white-space:nowrap;background:#ffffff"><span>24-09-22</span></div>
<div style="left:160px;top:600px;width:106px;height:25px;display:flex;align-items:center;justify-content:center;white-space:nowrap;background:#ffffff"><span><span style="">勒沃库森</span></span></div>
<div style="left:267px;top:600px;width:90px;height:25px;display:flex;align-items:center;justify-content:center;white-space:nowrap;background:#ffffff"><span><span style="color:#d42020">4-3</span>(2-3)</span></div>
<div style="left:358px;top:600px;width:37px;height:25px;display:flex;align-items:center;justify-content:center;white-space:nowrap;background:#ffffff"><span>6-2</span></div>
<div style="left:396px;top:600px;width:106px;height:25px;display:flex;align-items:center;justify-content:center;white-space:nowrap;background:#ffffff"><span><span style="color:#1e7e1e">沃尔夫斯堡</span><span class="card">1</span></span></div>
<div style="left:503px;top:600px;width:48px;height:25px;display:flex;align-items:center;justify-content:center;white-space:nowrap;background:#fdf9f6"><span>1.01</span></div>
<div style="left:552px;top:600px;width:84px;height:25px;display:flex;align-items:center;justify-content:center;white-space:nowrap;background:#fdf9f6"><span>球半/两</span></div>
<div style="left:637px;top:600px;width:52px;height:25px;display:flex;align-items:center;justify-content:center;white-space:nowrap;background:#fdf9f6"><span>0.88</span></div>
<div style="left:690px;top:600px;width:66px;height:25px;display:flex;align-items:center;justify-content:center;white-space:nowrap;background:#eef7fb"><span>1.26</span></div>
<div style="left:757px;top:600px;width:66px;height:25px;display:flex;align-items:center;justify-content:center;white-space:nowrap;background:#eef7fb"><span>6.25</span></div>
<div style="left:824px;top:600px;width:68px;height:25px;display:flex;align-items:center;justify-content:center;white-space:nowrap;background:#eef7fb"><span>9.94</span></div>
<div style="left:893px;top:600px;width:38px;height:25px;display:flex;align-items:center;justify-content:center;white-space:nowrap;background:#ffffff;color:#1c1cc8"><span>负</span></div>
<div style="left:932px;top:600px;width:38px;height:25px;display:flex;align-items:center;justify-content:center;white-space:nowrap;background:#ffffff;color:#d42020"><span>赢</span></div>
<div style="left:971px;top:600px;width:57px;height:25px;display:flex;align-items:center;justify-content:center;white-space:nowrap;background:#ffffff;color:#d42020"><span>大</span></div>
<div style="left:2px;top:626px;width:80px;height:25px;display:flex;align-items:center;justify-content:center;white-space:nowrap;background:#990099;color:#fff;-webkit-text-stroke:0.3px #fff"><span>德甲</span></div>
<div style="left:83px;top:626px;width:76px;height:25px;display:flex;align-items:center;justify-content:center;white-space:nowrap;background:#efefef"><span>24-09-14</span></div>
<div style="left:160px;top:626px;width:106px;height:25px;display:flex;align-items:center;justify-content:center;white-space:nowrap;background:#efefef"><span><span style="color:#1e7e1e">沃尔夫斯堡</span></span></div>
<div style="left:267px;top:626px;width:90px;height:25px;display:flex;align-items:center;justify-content:center;white-space:nowrap;background:#efefef"><span><span style="color:#d42020">1-2</span>(0-1)</span></div>
<div style="left:358px;top:626px;width:37px;height:25px;display:flex;align-items:center;justify-content:center;white-space:nowrap;background:#efefef"><span>5-4</span></div>
<div style="left:396px;top:626px;width:106px;height:25px;display:flex;align-items:center;justify-content:center;white-space:nowrap;background:#efefef"><span><span style="">法兰克福</span></span></div>
<div style="left:503px;top:626px;width:48px;height:25px;display:flex;align-items:center;justify-content:center;white-space:nowrap;background:#fdf9f6"><span>1.05</span></div>
<div style="left:552px;top:626px;width:84px;height:25px;display:flex;align-items:center;justify-content:center;white-space:nowrap;background:#fdf9f6"><span>平手</span></div>
<div style="left:637px;top:626px;width:52px;height:25px;display:flex;align-items:center;justify-content:center;white-space:nowrap;background:#fdf9f6"><span>0.84</span></div>
<div style="left:690px;top:626px;width:66px;height:25px;display:flex;align-items:center;justify-content:center;white-space:nowrap;background:#eef7fb"><span>2.64</span></div>
<div style="left:757px;top:626px;width:66px;height:25px;display:flex;align-items:center;justify-content:center;white-space:nowrap;background:#eef7fb"><span>3.46</span></div>
<div style="left:824px;top:626px;width:68px;height:25px;display:flex;align-items:center;justify-content:center;white-space:nowrap;background:#eef7fb"><span>2.58</span></div>
<div style="left:893px;top:626px;width:38px;height:25px;display:flex;align-items:center;justify-content:center;white-space:nowrap;background:#efefef;color:#1c1cc8"><span>负</span></div>
<div style="left:932px;top:626px;width:38px;height:25px;display:flex;align-items:center;justify-content:center;white-space:nowrap;background:#efefef;color:#1c1cc8"><span>输</span></div>
<div style="left:971px;top:626px;width:57px;height:25px;display:flex;align-items:center;justify-content:center;white-space:nowrap;background:#efefef;color:#d42020"><span>大</span></div>
<div style="left:2px;top:652px;width:80px;height:25px;display:flex;align-items:center;justify-content:center;white-space:nowrap;background:#00a3a3;color:#fff;-webkit-text-stroke:0.3px #fff"><span>球会友谊</span></div>
<div style="left:83px;top:652px;width:76px;height:25px;display:flex;align-items:center;justify-content:center;white-space:nowrap;background:#ffffff"><span>24-09-06</span></div>
<div style="left:160px;top:652px;width:106px;height:25px;display:flex;align-items:center;justify-content:center;white-space:nowrap;background:#ffffff"><span><span style="color:#1e7e1e">沃尔夫斯堡</span></span></div>
<div style="left:267px;top:652px;width:90px;height:25px;display:flex;align-items:center;justify-content:center;white-space:nowrap;background:#ffffff"><span><span style="color:#d42020">2-1</span>(1-0)</span></div>
<div style="left:358px;top:652px;width:37px;height:25px;display:flex;align-items:center;justify-content:center;white-space:nowrap;background:#ffffff"><span>0-0</span></div>
<div style="left:396px;top:652px;width:106px;height:25px;display:flex;align-items:center;justify-content:center;white-space:nowrap;background:#ffffff"><span><span style="">汉诺威96</span></span></div>
<div style="left:503px;top:652px;width:48px;height:25px;display:flex;align-items:center;justify-content:center;white-space:nowrap;background:#fdf9f6"><span></span></div>
<div style="left:552px;top:652px;width:84px;height:25px;display:flex;align-items:center;justify-content:center;white-space:nowrap;background:#fdf9f6"><span></span></div>
<div style="left:637px;top:652px;width:52px;height:25px;display:flex;align-items:center;justify-content:center;white-space:nowrap;background:#fdf9f6"><span></span></div>
<div style="left:690px;top:652px;width:66px;height:25px;display:flex;align-items:center;justify-content:center;white-space:nowrap;background:#eef7fb"><span>2.15</span></div>
<div style="left:757px;top:652px;width:66px;height:25px;display:flex;align-items:center;justify-content:center;white-space:nowrap;background:#eef7fb"><span>3.78</span></div>
<div style="left:824px;top:652px;width:68px;height:25px;display:flex;align-items:center;justify-content:center;white-space:nowrap;background:#eef7fb"><span>2.75</span></div>
<div style="left:893px;top:652px;width:38px;height:25px;display:flex;align-items:center;justify-content:center;white-space:nowrap;background:#ffffff;color:#d42020"><span>胜</span></div>
<div style="left:932px;top:652px;width:38px;height:25px;display:flex;align-items:center;justify-content:center;white-space:nowrap;background:#ffffff;color:#333333"><span></span></div>
<div style="left:971px;top:652px;width:57px;height:25px;display:flex;align-items:center;justify-content:center;white-space:nowrap;background:#ffffff;color:#333333"><span></span></div>
<div style="left:2px;top:678px;width:80px;height:25px;display:flex;align-items:center;justify-content:center;white-space:nowrap;background:#990099;color:#fff;-webkit-text-stroke:0.3px #fff"><span>德甲</span></div>
<div style="left:83px;top:678px;width:76px;height:25px;display:flex;align-items:center;justify-content:center;white-space:nowrap;background:#efefef"><span>24-08-31</span></div>
<div style="left:160px;top:678px;width:106px;height:25px;display:flex;align-items:center;justify-content:center;white-space:nowrap;background:#efefef"><span><span style="">荷尔斯泰因</span></span></div>
<div style="left:267px;top:678px;width:90px;height:25px;display:flex;align-items:center;justify-content:center;white-space:nowrap;background:#efefef"><span><span style="color:#d42020">0-2</span>(0-2)</span></div>
<div style="left:358px;top:678px;width:37px;height:25px;display:flex;align-items:center;justify-content:center;white-space:nowrap;background:#efefef"><span>1-7</span></div>
<div style="left:396px;top:678px;width:106px;height:25px;display:flex;align-items:center;justify-content:center;white-space:nowrap;background:#efefef"><span><span style="color:#1e7e1e">沃尔夫斯堡</span></span></div>
<div style="left:503px;top:678px;width:48px;height:25px;display:flex;align-items:center;justify-content:center;white-space:nowrap;background:#fdf9f6"><span>0.86</span></div>
<div style="left:552px;top:678px;width:84px;height:25px;display:flex;align-items:center;justify-content:center;white-space:nowrap;background:#fdf9f6"><span>受平/半</span></div>
<div style="left:637px;top:678px;width:52px;height:25px;display:flex;align-items:center;justify-content:center;white-space:nowrap;background:#fdf9f6"><span>1.03</span></div>
<div style="left:690px;top:678px;width:66px;height:25px;display:flex;align-items:center;justify-content:center;white-space:nowrap;background:#eef7fb"><span>2.93</span></div>
<div style="left:757px;top:678px;width:66px;height:25px;display:flex;align-items:center;justify-content:center;white-space:nowrap;background:#eef7fb"><span>3.62</span></div>
<div style="left:824px;top:678px;width:68px;height:25px;display:flex;align-items:center;justify-content:center;white-space:nowrap;background:#eef7fb"><span>2.28</span></div>
<div style="left:893px;top:678px;width:38px;height:25px;display:flex;align-items:center;justify-content:center;white-space:nowrap;background:#efefef;color:#d42020"><span>胜</span></div>
<div style="left:932px;top:678px;width:38px;height:25px;display:flex;align-items:center;justify-content:center;white-space:nowrap;background:#efefef;color:#d42020"><span>赢</span></div>
<div style="left:971px;top:678px;width:57px;height:25px;display:flex;align-items:center;justify-content:center;white-space:nowrap;background:#efefef;color:#1c1cc8"><span>小</span></div>
<div style="left:2px;top:704px;width:1026px;height:25px;background:#fff;display:flex;align-items:center;justify-content:center;white-space:nowrap;letter-spacing:0.22px"><span>近<span style="color:#d42020">10</span>场,胜3平4负3, 胜率:<span style="color:#d42020">30%</span> 让胜率:<span style="color:#d42020">55.6%</span> 大率:<span style="color:#d42020">55.6%</span> 单率:<span style="color:#d42020">30%</span></span></div>
<div style="left:1px;top:404px;width:1027px;height:1px;background:#bdbdbd"></div>
<div style="left:502px;top:424px;width:526px;height:1px;background:#bdbdbd"></div>
<div style="left:1px;top:443px;width:1027px;height:1px;background:#bdbdbd"></div>
<div style="left:1px;top:469px;width:1027px;height:1px;background:#bdbdbd"></div>
<div style="left:1px;top:495px;width:1027px;height:1px;background:#bdbdbd"></div>
<div style="left:1px;top:521px;width:1027px;height:1px;background:#bdbdbd"></div>
<div style="left:1px;top:547px;width:1027px;height:1px;background:#bdbdbd"></div>
<div style="left:1px;top:573px;width:1027px;height:1px;background:#bdbdbd"></div>
<div style="left:1px;top:599px;width:1027px;height:1px;background:#bdbdbd"></div>
<div style="left:1px;top:625px;width:1027px;height:1px;background:#bdbdbd"></div>
<div style="left:1px;top:651px;width:1027px;height:1px;background:#bdbdbd"></div>
<div style="left:1px;top:677px;width:1027px;height:1px;background:#bdbdbd"></div>
<div style="left:1px;top:703px;width:1027px;height:1px;background:#bdbdbd"></div>
<div style="left:1px;top:729px;width:1027px;height:1px;background:#bdbdbd"></div>
<div style="left:1px;top:404px;width:1px;height:299px;background:#bdbdbd"></div>
<div style="left:82px;top:404px;width:1px;height:299px;background:#bdbdbd"></div>
<div style="left:159px;top:404px;width:1px;height:299px;background:#bdbdbd"></div>
<div style="left:266px;top:404px;width:1px;height:299px;background:#bdbdbd"></div>
<div style="left:357px;top:404px;width:1px;height:299px;background:#bdbdbd"></div>
<div style="left:395px;top:404px;width:1px;height:299px;background:#bdbdbd"></div>
<div style="left:502px;top:404px;width:1px;height:299px;background:#bdbdbd"></div>
<div style="left:551px;top:424px;width:1px;height:279px;background:#bdbdbd"></div>
<div style="left:636px;top:424px;width:1px;height:279px;background:#bdbdbd"></div>
<div style="left:689px;top:404px;width:1px;height:299px;background:#bdbdbd"></div>
<div style="left:756px;top:424px;width:1px;height:279px;background:#bdbdbd"></div>
<div style="left:823px;top:424px;width:1px;height:279px;background:#bdbdbd"></div>
<div style="left:892px;top:404px;width:1px;height:299px;background:#bdbdbd"></div>
<div style="left:931px;top:424px;width:1px;height:279px;background:#bdbdbd"></div>
<div style="left:970px;top:424px;width:1px;height:279px;background:#bdbdbd"></div>
<div style="left:1px;top:703px;width:1px;height:27px;background:#bdbdbd"></div>
<div style="left:2px;top:469px;width:80px;height:1px;background:#990099"><div style="left:0;top:0;width:100%;height:1px;background:rgba(255,255,255,0.5)"></div></div>
<div style="left:2px;top:495px;width:80px;height:1px;background:#a40000"><div style="left:0;top:0;width:100%;height:1px;background:rgba(255,255,255,0.5)"></div></div>
<div style="left:2px;top:521px;width:80px;height:1px;background:#990099"><div style="left:0;top:0;width:100%;height:1px;background:rgba(255,255,255,0.5)"></div></div>
<div style="left:2px;top:547px;width:80px;height:1px;background:#990099"><div style="left:0;top:0;width:100%;height:1px;background:rgba(255,255,255,0.5)"></div></div>
<div style="left:2px;top:573px;width:80px;height:1px;background:#990099"><div style="left:0;top:0;width:100%;height:1px;background:rgba(255,255,255,0.5)"></div></div>
<div style="left:2px;top:599px;width:80px;height:1px;background:#990099"><div style="left:0;top:0;width:100%;height:1px;background:rgba(255,255,255,0.5)"></div></div>
<div style="left:2px;top:625px;width:80px;height:1px;background:#990099"><div style="left:0;top:0;width:100%;height:1px;background:rgba(255,255,255,0.5)"></div></div>
<div style="left:2px;top:651px;width:80px;height:1px;background:#990099"><div style="left:0;top:0;width:100%;height:1px;background:rgba(255,255,255,0.5)"></div></div>
<div style="left:2px;top:677px;width:80px;height:1px;background:#00a3a3"><div style="left:0;top:0;width:100%;height:1px;background:rgba(255,255,255,0.5)"></div></div>
<div style="left:2px;top:703px;width:80px;height:1px;background:#990099"><div style="left:0;top:0;width:100%;height:1px;background:rgba(255,255,255,0.5)"></div></div>
<div style="left:2px;top:405px;width:80px;height:38px;display:flex;align-items:center;justify-content:center;white-space:nowrap;"><span>类型</span></div>
<div style="left:83px;top:405px;width:76px;height:38px;display:flex;align-items:center;justify-content:center;white-space:nowrap;"><span>日期</span></div>
<div style="left:160px;top:405px;width:106px;height:38px;display:flex;align-items:center;justify-content:center;white-space:nowrap;"><span>主场</span></div>
<div style="left:267px;top:405px;width:90px;height:38px;display:flex;align-items:center;justify-content:center;white-space:nowrap;"><span>比分(半场)</span></div>
<div style="left:358px;top:405px;width:37px;height:38px;display:flex;align-items:center;justify-content:center;white-space:nowrap;"><span>角球</span></div>
<div style="left:396px;top:405px;width:106px;height:38px;display:flex;align-items:center;justify-content:center;white-space:nowrap;"><span>客场</span></div>
<div style="left:503px;top:425px;width:48px;height:18px;display:flex;align-items:center;justify-content:center;white-space:nowrap;"><span>主</span></div>
<div style="left:552px;top:425px;width:84px;height:18px;display:flex;align-items:center;justify-content:center;white-space:nowrap;"><span>让球</span></div>
<div style="left:637px;top:425px;width:52px;height:18px;display:flex;align-items:center;justify-content:center;white-space:nowrap;"><span>客</span></div>
<div style="left:690px;top:425px;width:66px;height:18px;display:flex;align-items:center;justify-content:center;white-space:nowrap;"><span>主</span></div>
<div style="left:757px;top:425px;width:66px;height:18px;display:flex;align-items:center;justify-content:center;white-space:nowrap;"><span>和</span></div>
<div style="left:824px;top:425px;width:68px;height:18px;display:flex;align-items:center;justify-content:center;white-space:nowrap;"><span>客</span></div>
<div style="left:893px;top:425px;width:38px;height:18px;display:flex;align-items:center;justify-content:center;white-space:nowrap;"><span>胜负</span></div>
<div style="left:932px;top:425px;width:38px;height:18px;display:flex;align-items:center;justify-content:center;white-space:nowrap;"><span>让球</span></div>
<div style="left:971px;top:425px;width:57px;height:18px;display:flex;align-items:center;justify-content:center;white-space:nowrap;"><span>进球数</span></div>
<div class="sel" style="left:536px;top:405px;width:59px;height:17px;"><span style="position:absolute;left:4px;top:0;line-height:17px;font-size:13.33px;">Crow*</span><svg style="position:absolute;left:44px;top:4px" width="12" height="8" viewBox="0 0 12 8"><path d="M1.3 1.3 L6 6 L10.7 1.3" fill="none" stroke="#000" stroke-width="2.3"/></svg></div>
<div class="sel" style="left:604px;top:405px;width:49px;height:17px;"><span style="position:absolute;left:3px;top:0;line-height:17px;font-size:14px;">终指</span><svg style="position:absolute;left:34px;top:4px" width="12" height="8" viewBox="0 0 12 8"><path d="M1.3 1.3 L6 6 L10.7 1.3" fill="none" stroke="#000" stroke-width="2.3"/></svg></div>
<div class="sel" style="left:726px;top:405px;width:68px;height:17px;"><span style="position:absolute;left:3px;top:0;line-height:17px;font-size:14px;">平均值</span><svg style="position:absolute;left:53px;top:4px" width="12" height="8" viewBox="0 0 12 8"><path d="M1.3 1.3 L6 6 L10.7 1.3" fill="none" stroke="#000" stroke-width="2.3"/></svg></div>
<div class="sel" style="left:804px;top:405px;width:49px;height:17px;"><span style="position:absolute;left:3px;top:0;line-height:17px;font-size:14px;">终指</span><svg style="position:absolute;left:34px;top:4px" width="12" height="8" viewBox="0 0 12 8"><path d="M1.3 1.3 L6 6 L10.7 1.3" fill="none" stroke="#000" stroke-width="2.3"/></svg></div>
<div class="sel" style="left:935px;top:405px;width:49px;height:17px;"><span style="position:absolute;left:3px;top:0;line-height:17px;font-size:14px;">全场</span><svg style="position:absolute;left:34px;top:4px" width="12" height="8" viewBox="0 0 12 8"><path d="M1.3 1.3 L6 6 L10.7 1.3" fill="none" stroke="#000" stroke-width="2.3"/></svg></div>
</body></html>
